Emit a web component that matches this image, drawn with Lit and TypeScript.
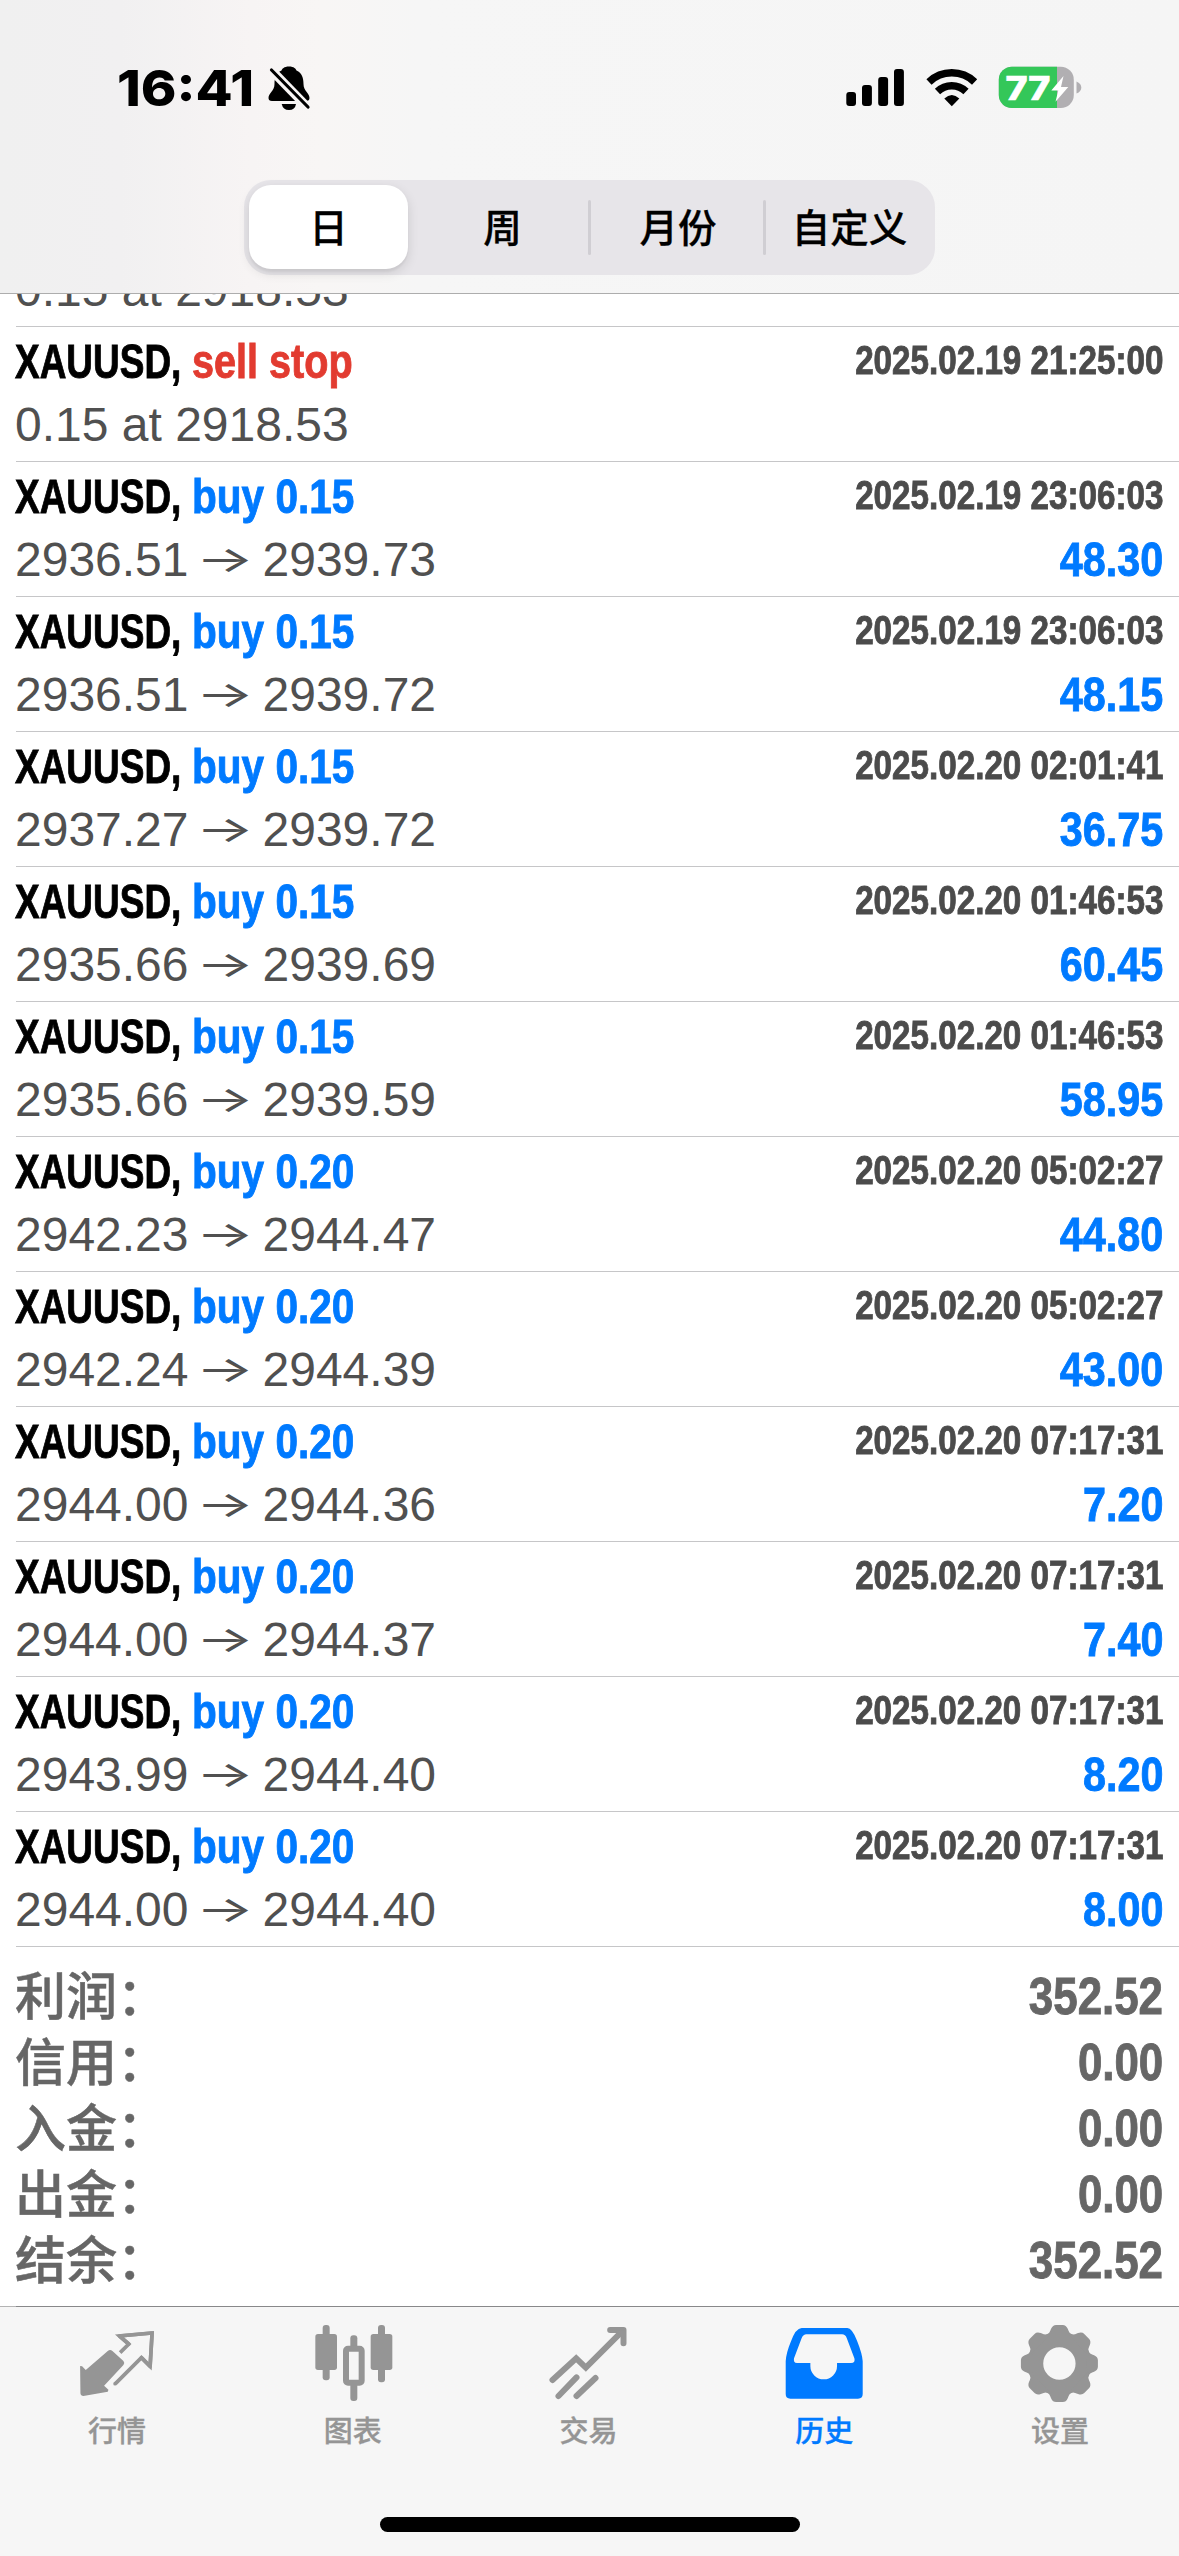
import { LitElement, html, svg, css } from "lit";
import { customElement, property } from "lit/decorators.js";
import { classMap } from "lit/directives/class-map.js";

interface Deal {
  side: string;
  kind: "buy" | "sell";
  open: string;
  close?: string;
  time: string;
  profit?: string;
}

const buy = (volume: string, open: string, close: string, time: string, profit: string): Deal => ({
  side: `buy ${volume}`,
  kind: "buy",
  open,
  close,
  time,
  profit,
});

const pending: Deal = {
  side: "sell stop",
  kind: "sell",
  open: "0.15 at 2918.53",
  time: "2025.02.19 21:25:00",
};

const deals: Deal[] = [
  pending,
  buy("0.15", "2936.51", "2939.73", "2025.02.19 23:06:03", "48.30"),
  buy("0.15", "2936.51", "2939.72", "2025.02.19 23:06:03", "48.15"),
  buy("0.15", "2937.27", "2939.72", "2025.02.20 02:01:41", "36.75"),
  buy("0.15", "2935.66", "2939.69", "2025.02.20 01:46:53", "60.45"),
  buy("0.15", "2935.66", "2939.59", "2025.02.20 01:46:53", "58.95"),
  buy("0.20", "2942.23", "2944.47", "2025.02.20 05:02:27", "44.80"),
  buy("0.20", "2942.24", "2944.39", "2025.02.20 05:02:27", "43.00"),
  buy("0.20", "2944.00", "2944.36", "2025.02.20 07:17:31", "7.20"),
  buy("0.20", "2944.00", "2944.37", "2025.02.20 07:17:31", "7.40"),
  buy("0.20", "2943.99", "2944.40", "2025.02.20 07:17:31", "8.20"),
  buy("0.20", "2944.00", "2944.40", "2025.02.20 07:17:31", "8.00"),
];

const totals: [string, string][] = [
  ["利润", "352.52"],
  ["信用", "0.00"],
  ["入金", "0.00"],
  ["出金", "0.00"],
  ["结余", "352.52"],
];

const quotesIcon = svg`
  <path fill="currentColor" d="M240 228 L246 229 L257 240 L323 183 Q330 177 337 183 L370 213 Q375 219 370 225 L312 287 L325 299 L323 305 L250 318 Q242 318 241 310 Z"/>
  <path fill="none" stroke="currentColor" stroke-width="11" d="M360 188 L386 162 L358 138 L456 129 L450 229 L424 203 L346 281"/>
  <circle cx="345" cy="281" r="5.5" fill="currentColor"/>
  <path fill="none" stroke="currentColor" stroke-width="11" stroke-linejoin="round" stroke-linecap="round" d="M386 162 L358 138 L456 129 L450 229 L424 203"/>`;

const chartIcon = svg`
  <g fill="currentColor">
    <rect x="967" y="105" width="21" height="166" rx="9"/>
    <rect x="945" y="132" width="65" height="108" rx="8"/>
    <rect x="1133" y="105" width="21" height="172" rx="9"/>
    <rect x="1111" y="132" width="65" height="108" rx="8"/>
    <rect x="1050" y="136" width="21" height="40" rx="9"/>
    <rect x="1050" y="278" width="21" height="55" rx="9"/>
  </g>
  <rect x="1037" y="176" width="47" height="102" rx="6" fill="none" stroke="currentColor" stroke-width="18"/>`;

const tradeIcon = svg`
  <g fill="none" stroke="currentColor" stroke-width="18" stroke-linecap="round">
    <path d="M489 270 L560 205 L589 233 L700 122"/>
    <path d="M662 120 H702 V160" stroke-linejoin="round"/>
    <path d="M507 318 L561 262"/>
    <path d="M561 318 L618 264"/>
  </g>
  <path fill="currentColor" d="M676 122 H704 V148 Z"/>`;

const historyIcon = svg`
  <path fill="currentColor" fill-rule="evenodd" d="M18 214 Q19 190 33 156 Q48 114 66 114 H203 Q217 114 232 152 Q248 192 249 214 V312 Q249 326 235 326 H32 Q18 326 18 312 Z
    M80 133 Q71 133 66 144 L43 205 Q40 219 52 219 H92 V228 A40 40 0 0 0 172 228 V219 H214 Q228 219 224 205 L201 144 Q197 133 187 133 Z"/>`;

const settingsIcon = svg`
  <g transform="translate(838.5 220.5)" fill="currentColor">
    <circle r="72" fill="none" stroke="currentColor" stroke-width="47"/>
    ${[0, 45, 90, 135, 180, 225, 270, 315].map(
      (a) => svg`<path transform="rotate(${a})" d="M-43 -80 L-34 -89 Q-30 -91 -25 -104 Q-20 -115.500 -10 -115.500 H10 Q20 -115.500 25 -104 Q30 -91 34 -89 L43 -80 Z"/>`
    )}
  </g>`;

const tabs = [
  { label: "行情", box: "233.700 93 240 252", icon: quotesIcon, active: false },
  { label: "图表", box: "941 93 240 252", icon: chartIcon, active: false },
  { label: "交易", box: "478.500 93 240 252", icon: tradeIcon, active: false },
  { label: "历史", box: "15.900 93 240 252", icon: historyIcon, active: true },
  { label: "设置", box: "723.300 93 240 252", icon: settingsIcon, active: false },
];

@customElement("deal-row")
export class DealRow extends LitElement {
  @property({ attribute: false }) deal!: Deal;
  /** Leaves out the title line of a row that is scrolled partly under the header. */
  @property({ type: Boolean }) partial = false;

  static styles = css`
    :host {
      display: block;
      box-sizing: border-box;
      height: 135px;
      margin-left: 16px;
      padding: 3px 16px 0 0;
      border-bottom: 1px solid #c6c6c8;
      font-family: "Liberation Sans", Arial, sans-serif;
      font-size: 48px;
      line-height: 63px;
      white-space: nowrap;
    }
    :host([partial]) {
      height: 72px;
    }
    .line {
      display: flex;
      height: 63px;
      margin-left: -1px;
    }
    .symbol,
    .side,
    .time,
    .profit {
      font-weight: 700;
      -webkit-text-stroke: 0.9px currentColor;
    }
    .symbol {
      width: 177px;
      color: #000;
      transform: scaleX(0.77);
      transform-origin: left;
    }
    .side {
      transform: scaleX(0.845);
      transform-origin: left;
    }
    .side.sell {
      transform: scaleX(0.825);
    }
    .buy,
    .profit {
      color: #007aff;
    }
    .sell {
      color: #e23b30;
    }
    .time {
      margin-left: auto;
      font-size: 40px;
      line-height: 61px;
      color: #4b4b4b;
      transform: scaleX(0.83);
      transform-origin: right;
    }
    .price {
      color: #505050;
    }
    .arrow {
      display: inline-block;
      width: 74px;
      text-align: center;
      font-family: Inter, sans-serif;
      font-size: 36px;
      line-height: 50px;
      transform: translate(-1px, -4px) scaleX(1.7);
    }
    .profit {
      margin-left: auto;
      transform: scaleX(0.86);
      transform-origin: right;
    }
  `;

  render() {
    const d = this.deal;
    return html`
      ${this.partial
        ? ""
        : html`<div class="line">
            <span class="symbol">XAUUSD,</span>
            <span class=${classMap({ side: true, buy: d.kind === "buy", sell: d.kind === "sell" })}>${d.side}</span>
            <span class="time">${d.time}</span>
          </div>`}
      <div class="line">
        <span class="price">${d.open}${d.close ? html`<span class="arrow">→</span>${d.close}` : ""}</span>
        ${d.profit ? html`<span class="profit">${d.profit}</span>` : ""}
      </div>
    `;
  }
}

@customElement("app-root")
export class AppRoot extends LitElement {
  static styles = css`
    :host {
      display: flex;
      flex-direction: column;
      width: 1179px;
      height: 2556px;
      overflow: hidden;
      background: #fff;
      font-family: "Liberation Sans", "Noto Sans CJK SC", sans-serif;
    }
    .header {
      box-sizing: border-box;
      height: 294px;
      border-bottom: 1px solid #adadad;
      background: linear-gradient(90deg, #f0f0f0 0, #f1f0f1 120px, #f7f4f4 250px, #f8f6f5 320px, #f6f6f6 420px, #f5f5f5 100%);
    }
    .status {
      display: flex;
      align-items: center;
      box-sizing: border-box;
      height: 176px;
      padding: 0 97px 0 117px;
    }
    .clock {
      width: 149px;
      font: 800 50px/60px Inter, sans-serif;
      transform: scaleX(1.08);
      transform-origin: left;
    }
    .bell {
      width: 48px;
      height: 48px;
    }
    .signals {
      margin-left: auto;
      width: 240px;
      height: 48px;
    }
    .charge {
      font: 800 33px Inter, sans-serif;
    }
    .segments {
      display: flex;
      align-items: stretch;
      box-sizing: border-box;
      width: 691px;
      height: 95px;
      margin: 3.500px auto 0;
      padding: 5.500px 5px;
      border-radius: 27px;
      background: #e7e5e9;
      font: 500 38.500px/80px "Noto Sans CJK SC", sans-serif;
      color: #000;
    }
    .segment {
      flex: 0 0 159px;
      box-sizing: border-box;
      text-align: center;
      border-radius: 22px;
      -webkit-text-stroke: 0.3px currentColor;
    }
    .segment.selected {
      background: #fff;
      box-shadow: 0 4px 12px rgba(0, 0, 0, 0.12), 0 3px 2px rgba(0, 0, 0, 0.04);
    }
    .segment.second {
      flex-basis: 180px;
      padding-left: 9px;
    }
    .segment.third {
      flex-basis: 172px;
      padding-left: 2px;
    }
    .segment.fourth {
      flex: 1 1 0;
      padding-left: 3px;
    }
    .divider {
      flex: 0 0 3px;
      height: 55px;
      align-self: center;
      background: #d0ced3;
      border-radius: 1.500px;
    }
    .list {
      height: 1653px;
      overflow: hidden;
    }
    .list deal-row:first-child {
      margin-top: -39px;
    }
    .totals {
      height: 359px;
      box-sizing: border-box;
      padding: 17px 16px 0 15px;
      color: #666;
    }
    .total {
      display: flex;
      justify-content: space-between;
      height: 66px;
      line-height: 66px;
      font-size: 51px;
    }
    .name {
      font-family: "Noto Sans CJK SC", sans-serif;
      font-weight: 500;
      line-height: 59px;
      -webkit-text-stroke: 0.5px currentColor;
    }
    .sum {
      font-weight: 700;
      -webkit-text-stroke: 0.9px currentColor;
      transform: scaleX(0.86);
      transform-origin: right;
    }
    .rule {
      flex: 0 0 1px;
      background: linear-gradient(90deg, #b4b4b4 16px, #88888a 16px);
    }
    .bar {
      flex: 1;
      display: flex;
      flex-direction: column;
      align-items: center;
      background: #f6f6f6;
    }
    .tabs {
      display: flex;
      align-self: stretch;
      height: 210px;
    }
    .tab {
      flex: 1 1 0;
      display: flex;
      flex-direction: column;
      align-items: center;
      padding-top: 14px;
      color: #959595;
      font: 500 29px/44px "Noto Sans CJK SC", sans-serif;
    }
    .tab.active {
      color: #007aff;
    }
    .tab svg {
      width: 80px;
      height: 84px;
      overflow: visible;
      margin-bottom: 2px;
    }
    .tab span {
      margin-right: 2px;
      -webkit-text-stroke: 0.3px currentColor;
    }
    .home {
      width: 420px;
      height: 15px;
      border-radius: 8px;
      background: #000;
    }
  `;

  private statusBar() {
    return html`
      <div class="status">
        <span class="clock">16:41</span>
        <svg class="bell" viewBox="266 64 48 48">
          <mask id="cut">
            <rect x="260" y="60" width="60" height="60" fill="#fff" />
            <path d="M267 65.500 L313 113" stroke="#000" stroke-width="9" />
          </mask>
          <g mask="url(#cut)">
            <path d="M289 66.500 C284 66.500 282 69 281.500 70.500 C276 73 274.500 78 274.500 84 C274.500 91 268.500 93 268.500 98 Q268.500 101 272 101 H306 Q309.500 101 309.500 98 C309.500 93 303.500 91 303.500 84 C303.500 78 302 73 296.500 70.500 C296 69 294 66.500 289 66.500 Z" />
          </g>
          <path d="M281.700 104 H296 Q295 110 289 110 Q283 110 281.700 104 Z" />
          <path d="M271.500 70 L308 107" stroke="#000" stroke-width="3.200" stroke-linecap="round" />
        </svg>
        <svg class="signals" viewBox="842 64 240 48">
          <rect x="846.300" y="92" width="9.700" height="14" rx="3" />
          <rect x="862" y="85" width="9.900" height="21" rx="3" />
          <rect x="878.200" y="77" width="9.900" height="29" rx="3" />
          <rect x="894" y="69" width="9.900" height="37" rx="3" />
          <g fill="none" stroke="#000" stroke-width="7.500">
            <path d="M929 82 A33 33 0 0 1 974.600 82" />
            <path d="M937.500 91.500 A20.500 20.500 0 0 1 966 91.500" />
          </g>
          <path d="M951.800 106.300 L944.300 98.500 Q951.800 91.500 959.300 98.500 Z" />
          <clipPath id="cell"><rect x="998.800" y="66.700" width="75" height="41.300" rx="13" /></clipPath>
          <g clip-path="url(#cell)">
            <rect x="998" y="66" width="77" height="43" fill="#b1afb2" />
            <rect x="998" y="66" width="59" height="43" fill="#34c759" />
          </g>
          <path d="M1076.500 81.500 Q1081.300 83.500 1081.300 87.500 Q1081.300 91.500 1076.500 93.500 Z" fill="#b1afb2" />
          <text class="charge" x="1005.500" y="100" fill="#fff" stroke="#fff" stroke-width="0.600" textLength="45" lengthAdjust="spacingAndGlyphs">77</text>
          <path d="M1063.500 76 L1051.300 90.500 H1058.300 L1055.500 101.800 L1068.300 87 H1061 Z" fill="#fff" />
        </svg>
      </div>
    `;
  }

  render() {
    return html`
      <div class="header">
        ${this.statusBar()}
        <div class="segments">
          <span class="segment selected">日</span>
          <span class="segment second">周</span>
          <span class="divider"></span>
          <span class="segment third">月份</span>
          <span class="divider"></span>
          <span class="segment fourth">自定义</span>
        </div>
      </div>
      <div class="list">
        <deal-row partial .deal=${pending}></deal-row>
        ${deals.map((d) => html`<deal-row .deal=${d}></deal-row>`)}
      </div>
      <div class="totals">
        ${totals.map(
          ([name, sum]) => html`
            <div class="total">
              <span class="name">${name}：</span>
              <span class="sum">${sum}</span>
            </div>
          `
        )}
      </div>
      <div class="rule"></div>
      <div class="bar">
        <div class="tabs">
          ${tabs.map(
            (t) => html`
              <div class=${classMap({ tab: true, active: t.active })}>
                <svg viewBox=${t.box}>${t.icon}</svg>
                <span>${t.label}</span>
              </div>
            `
          )}
        </div>
        <div class="home"></div>
      </div>
    `;
  }
}
